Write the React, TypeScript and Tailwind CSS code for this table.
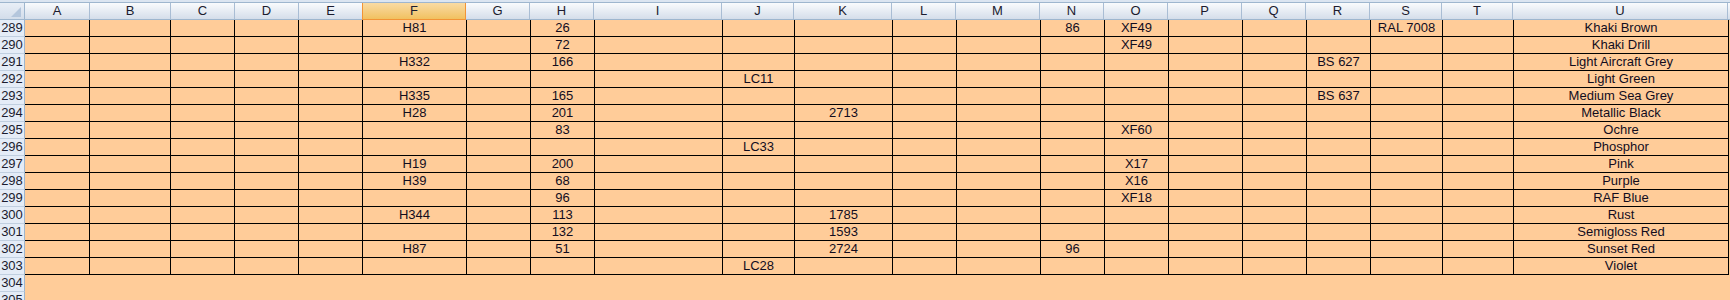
import React from "react";

const COLS: { l: string; w: string }[] = [
  { l: "A", w: "w-[65px]" },
  { l: "B", w: "w-[81px]" },
  { l: "C", w: "w-[64px]" },
  { l: "D", w: "w-[64px]" },
  { l: "E", w: "w-[64px]" },
  { l: "F", w: "w-[104px]" },
  { l: "G", w: "w-[64px]" },
  { l: "H", w: "w-[64px]" },
  { l: "I", w: "w-[128px]" },
  { l: "J", w: "w-[72px]" },
  { l: "K", w: "w-[98px]" },
  { l: "L", w: "w-[64px]" },
  { l: "M", w: "w-[84px]" },
  { l: "N", w: "w-[64px]" },
  { l: "O", w: "w-[64px]" },
  { l: "P", w: "w-[74px]" },
  { l: "Q", w: "w-[64px]" },
  { l: "R", w: "w-[64px]" },
  { l: "S", w: "w-[72px]" },
  { l: "T", w: "w-[71px]" },
  { l: "U", w: "w-[215px]" },
];

const ROWS: { n: number; d: Record<string, string> }[] = [
  { n: 289, d: { F: "H81", H: "26", N: "86", O: "XF49", S: "RAL 7008", U: "Khaki Brown" } },
  { n: 290, d: { H: "72", O: "XF49", U: "Khaki Drill" } },
  { n: 291, d: { F: "H332", H: "166", R: "BS 627", U: "Light Aircraft Grey" } },
  { n: 292, d: { J: "LC11", U: "Light Green" } },
  { n: 293, d: { F: "H335", H: "165", R: "BS 637", U: "Medium Sea Grey" } },
  { n: 294, d: { F: "H28", H: "201", K: "2713", U: "Metallic Black" } },
  { n: 295, d: { H: "83", O: "XF60", U: "Ochre" } },
  { n: 296, d: { J: "LC33", U: "Phosphor" } },
  { n: 297, d: { F: "H19", H: "200", O: "X17", U: "Pink" } },
  { n: 298, d: { F: "H39", H: "68", O: "X16", U: "Purple" } },
  { n: 299, d: { H: "96", O: "XF18", U: "RAF Blue" } },
  { n: 300, d: { F: "H344", H: "113", K: "1785", U: "Rust" } },
  { n: 301, d: { H: "132", K: "1593", U: "Semigloss Red" } },
  { n: 302, d: { F: "H87", H: "51", K: "2724", N: "96", U: "Sunset Red" } },
  { n: 303, d: { J: "LC28", U: "Violet" } },
];

function RowHeader({ n }: { n: number }) {
  return (
    <div className="w-[25px] shrink-0 h-[17px] bg-[#e4ecf7] border-r border-r-[#9eb6ce] border-b border-b-[#c0cfe0] text-center leading-[16px] text-[#1b1b2e]">
      {n}
    </div>
  );
}

export default function App() {
  return (
    <div
      className="w-[1730px] h-[300px] overflow-hidden bg-[#ffcc99] text-[13px] text-[#120c1e]"
      style={{ fontFamily: '"Liberation Sans", Arial, sans-serif' }}
    >
      <div className="h-[2px] bg-[#dbe5f1]" />
      <div className="flex h-[18px] border-t border-t-[#9eb6ce] border-b border-b-[#9eb6ce] bg-gradient-to-b from-[#f9fbfd] to-[#d5deea]">
        <div className="w-[25px] shrink-0 h-full border-r border-r-[#9eb6ce] bg-gradient-to-b from-[#e9eff7] to-[#d3ddea] flex items-end justify-end pr-[3px] pb-[2px]">
          <svg width="10" height="10" viewBox="0 0 10 10">
            <polygon points="10,0 10,10 0,10" fill="#b4c6dc" />
          </svg>
        </div>
        {COLS.map((c) =>
          c.l === "F" ? (
            <div
              key={c.l}
              className={`${c.w} shrink-0 h-[17px] -mb-px border-r border-r-[#f29436] border-b border-b-[#f29436] -ml-px border-l border-l-[#f29436] bg-gradient-to-b from-[#f9dba3] to-[#f1c15f] text-center leading-[16px] text-[#1b1b2e]`}
            >
              {c.l}
            </div>
          ) : (
            <div
              key={c.l}
              className={`${c.w} shrink-0 h-full border-r border-r-[#a9bdd4] text-center leading-[16px] text-[#1b1b2e]`}
            >
              {c.l}
            </div>
          )
        )}
      </div>
      {ROWS.map((r) => (
        <div key={r.n} className="flex">
          <RowHeader n={r.n} />
          {COLS.map((c) => (
            <div
              key={c.l}
              className={`${c.w} shrink-0 h-[17px] border-r border-b border-black text-center leading-[16px] whitespace-nowrap overflow-hidden`}
            >
              {r.d[c.l] ?? ""}
            </div>
          ))}
        </div>
      ))}
      {[304, 305, 306].map((n) => (
        <div key={n} className="flex">
          <RowHeader n={n} />
          <div className="flex-1 h-[17px]" />
        </div>
      ))}
    </div>
  );
}
